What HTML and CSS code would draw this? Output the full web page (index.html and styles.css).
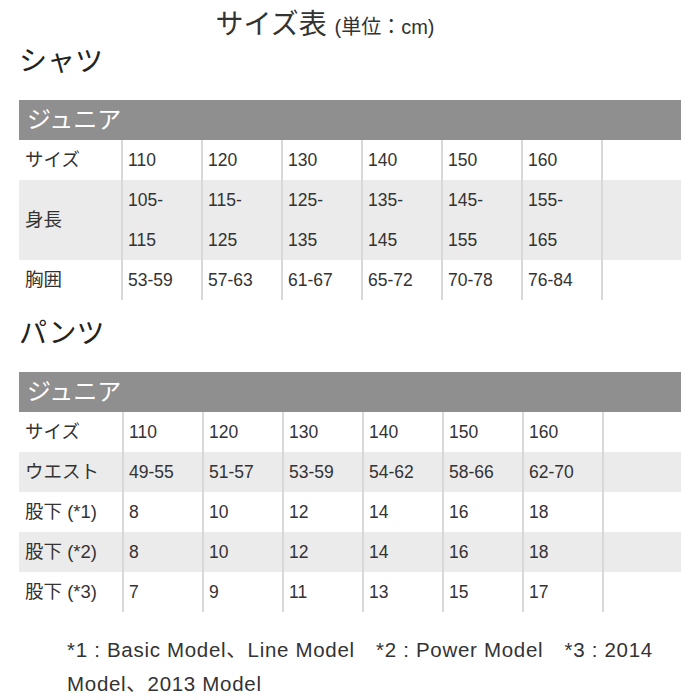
FILE: index.html
```html
<!DOCTYPE html>
<html lang="ja">
<head>
<meta charset="utf-8">
<title>サイズ表</title>
<link rel="stylesheet" href="styles.css">
</head>
<body>
<div class="page">
  <h1 class="title">サイズ表 <span class="unit">(単位：cm)</span></h1>

  <h2 class="section">シャツ</h2>
  <div class="chart">
    <div class="bar">ジュニア</div>
    <div class="row">
      <div class="label">サイズ</div>
      <div class="cell">110</div><div class="cell">120</div><div class="cell">130</div>
      <div class="cell">140</div><div class="cell">150</div><div class="cell">160</div>
      <div class="cell"></div>
    </div>
    <div class="row alt">
      <div class="label">身長</div>
      <div class="cell">105-115</div><div class="cell">115-125</div><div class="cell">125-135</div>
      <div class="cell">135-145</div><div class="cell">145-155</div><div class="cell">155-165</div>
      <div class="cell"></div>
    </div>
    <div class="row">
      <div class="label">胸囲</div>
      <div class="cell">53-59</div><div class="cell">57-63</div><div class="cell">61-67</div>
      <div class="cell">65-72</div><div class="cell">70-78</div><div class="cell">76-84</div>
      <div class="cell"></div>
    </div>
  </div>

  <h2 class="section second">パンツ</h2>
  <div class="chart wide">
    <div class="bar">ジュニア</div>
    <div class="row">
      <div class="label">サイズ</div>
      <div class="cell">110</div><div class="cell">120</div><div class="cell">130</div>
      <div class="cell">140</div><div class="cell">150</div><div class="cell">160</div>
      <div class="cell"></div>
    </div>
    <div class="row alt">
      <div class="label">ウエスト</div>
      <div class="cell">49-55</div><div class="cell">51-57</div><div class="cell">53-59</div>
      <div class="cell">54-62</div><div class="cell">58-66</div><div class="cell">62-70</div>
      <div class="cell"></div>
    </div>
    <div class="row">
      <div class="label">股下 (*1)</div>
      <div class="cell">8</div><div class="cell">10</div><div class="cell">12</div>
      <div class="cell">14</div><div class="cell">16</div><div class="cell">18</div>
      <div class="cell"></div>
    </div>
    <div class="row alt">
      <div class="label">股下 (*2)</div>
      <div class="cell">8</div><div class="cell">10</div><div class="cell">12</div>
      <div class="cell">14</div><div class="cell">16</div><div class="cell">18</div>
      <div class="cell"></div>
    </div>
    <div class="row">
      <div class="label">股下 (*3)</div>
      <div class="cell">7</div><div class="cell">9</div><div class="cell">11</div>
      <div class="cell">13</div><div class="cell">15</div><div class="cell">17</div>
      <div class="cell"></div>
    </div>
  </div>

  <p class="note">*1 : Basic Model、Line Model　*2 : Power Model　*3 : 2014<br>Model、2013 Model</p>
</div>
</body>
</html>
```

FILE: styles.css
```css
html, body {
  margin: 0;
  padding: 0;
  background: #ffffff;
}

body {
  font-family: "Liberation Sans", "Noto Sans CJK JP", sans-serif;
  color: #333333;
}

.page {
  padding: 0 19px;
}

.title {
  margin: 0;
  padding-top: 8px;
  padding-right: 50px;
  height: 32px;
  font-size: 28px;
  line-height: 34px;
  font-weight: normal;
  text-align: center;
  color: #333333;
}

.unit {
  font-size: 20px;
  line-height: 1;
}

.section {
  margin: 0 0 20px 0;
  padding-top: 2px;
  height: 38px;
  font-size: 28px;
  line-height: 40px;
  font-weight: normal;
  color: #222222;
}

.section.second {
  margin-top: 12px;
}

.chart {
  --label-w: 102px;
}

.chart.wide {
  --label-w: 103px;
}

.bar {
  height: 40px;
  line-height: 40px;
  background: #8f8f8f;
  color: #ffffff;
  font-size: 24px;
  padding-left: 8px;
}

.row {
  display: grid;
  grid-template-columns: var(--label-w) repeat(6, 80px) 1fr;
}

.row.alt {
  background: #ebebeb;
}

.label {
  display: flex;
  align-items: center;
  padding-left: 6px;
  font-size: 18.5px;
  line-height: 40px;
  white-space: nowrap;
}

.cell {
  border-left: 2px solid #d8d8d8;
  padding: 0 14px 0 5px;
  font-size: 17.5px;
  line-height: 40px;
  min-height: 40px;
}

.note {
  margin: 21px 0 0 0;
  padding-left: 48px;
  font-size: 20.5px;
  line-height: 34px;
  letter-spacing: 0.7px;
  color: #333333;
}
```
